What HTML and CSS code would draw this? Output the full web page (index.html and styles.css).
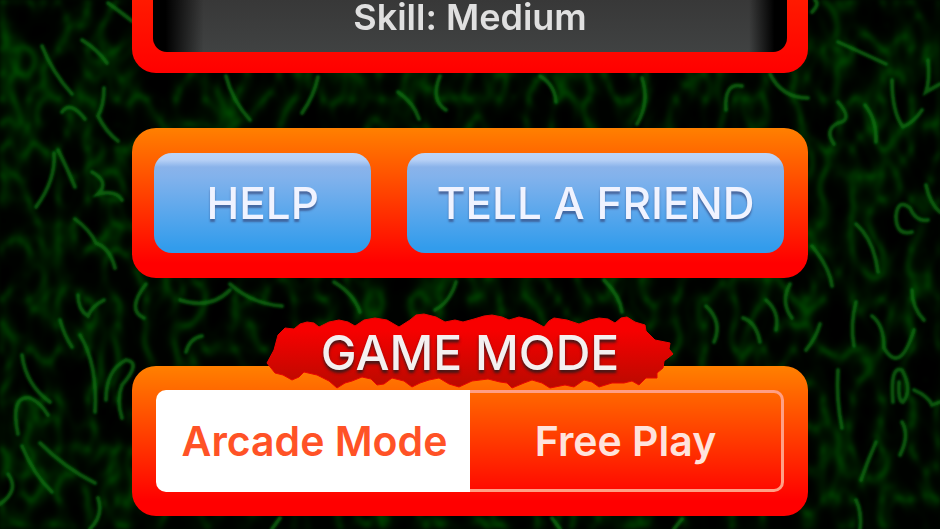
FILE: index.html
```html
<!DOCTYPE html>
<html lang="en">
<head>
  <meta charset="UTF-8">
  <meta name="viewport" content="width=device-width, initial-scale=1.0">
  <title>Game Mode</title>
  <link rel="stylesheet" href="styles.css">
</head>
<body>
  <svg class="grass" viewBox="0 0 940 529" preserveAspectRatio="xMidYMid slice" aria-hidden="true">
    <filter id="wisps" x="0" y="0" width="100%" height="100%" color-interpolation-filters="sRGB">
      <feTurbulence type="turbulence" baseFrequency="0.034 0.02" numOctaves="2" seed="8"/>
      <feColorMatrix values="0 0 0 0 0  1 0 0 0 0  0 0 0 0 0  0 0 0 0 1"/>
      <feComponentTransfer>
        <feFuncG type="table" tableValues="0.3 0.15 0.08 0.04 0.02 0.01 0.01 0 0 0 0 0 0"/>
      </feComponentTransfer>
      <feGaussianBlur stdDeviation="2"/>
    </filter>
    <filter id="soft">
      <feGaussianBlur stdDeviation="1"/>
    </filter>
    <rect width="940" height="529" filter="url(#wisps)"/>
    <g filter="url(#soft)">
      <g id="blades" class="blades">
        <path d="M108 3Q118 10 132 21"/>
        <path d="M42 46Q52 72 72 94"/>
        <path d="M82 40Q98 50 107 63"/>
        <path d="M104 88Q104 105 98 116Q106 132 118 141"/>
        <path d="M62 112Q70 100 85 119"/>
        <path d="M54 153Q56 180 36 207"/>
        <path d="M58 150Q68 170 75 187"/>
        <path d="M75 219Q90 230 96 243Q110 248 115 268"/>
        <path d="M92 172Q110 182 98 194Q116 190 122 200"/>
        <path d="M78 295Q78 310 88 316Q92 306 104 300"/>
        <path d="M60 320Q64 335 72 347"/>
        <path d="M80 335Q98 365 95 412"/>
        <path d="M106 400Q106 370 126 360Q142 362 122 385Q116 400 122 418"/>
        <path d="M22 355Q26 385 50 402"/>
        <path d="M18 434Q10 395 30 398Q40 402 48 415"/>
        <path d="M40 443Q65 468 95 483"/>
        <path d="M22 446Q34 475 52 492"/>
        <path d="M0 504Q20 490 8 474"/>
        <path d="M90 529Q104 515 98 498"/>
        <path d="M812 12Q820 4 815 0"/>
        <path d="M838 42Q856 50 886 64"/>
        <path d="M892 80Q892 112 903 127Q914 122 922 110"/>
        <path d="M928 60Q930 80 926 92L940 84"/>
        <path d="M838 102Q854 120 838 123Q824 130 834 144"/>
        <path d="M865 105Q877 120 876 142"/>
        <path d="M912 232Q896 236 896 216Q898 198 910 208Q916 222 928 220"/>
        <path d="M926 185Q930 204 940 212"/>
        <path d="M856 224Q874 240 878 272"/>
        <path d="M812 246Q830 268 832 286"/>
        <path d="M912 290Q912 308 924 320"/>
        <path d="M856 302Q850 325 854 346"/>
        <path d="M806 350Q816 338 820 324"/>
        <path d="M872 316Q884 325 884 348Q900 375 914 330"/>
        <path d="M893 402Q890 365 902 370Q913 390 903 402Q898 402 899 382"/>
        <path d="M914 390Q928 396 932 405L940 402"/>
        <path d="M876 442Q868 460 861 480"/>
        <path d="M902 422Q910 435 900 455"/>
        <path d="M856 500Q862 512 860 529"/>
        <path d="M838 370Q836 400 842 428"/>
        <path d="M226 76Q232 100 250 120"/>
        <path d="M318 77Q314 96 302 113"/>
        <path d="M398 92Q414 103 419 119"/>
        <path d="M440 76Q430 100 446 110"/>
        <path d="M540 76Q555 85 556 102"/>
        <path d="M642 78Q650 102 637 124"/>
        <path d="M726 110Q724 82 742 86"/>
        <path d="M770 74Q782 98 808 98"/>
        <path d="M146 284Q126 310 144 318"/>
        <path d="M180 300Q210 310 230 290"/>
        <path d="M186 352Q190 338 202 336"/>
        <path d="M230 284Q252 304 282 306"/>
        <path d="M334 282Q354 294 360 312"/>
        <path d="M456 282Q450 302 435 310"/>
        <path d="M604 280Q620 296 622 312"/>
        <path d="M706 306Q723 322 714 342"/>
        <path d="M743 318Q756 322 760 342"/>
        <path d="M766 300Q780 312 776 330"/>
        <path d="M790 284Q780 302 792 318"/>
        <path d="M280 518L272 529M552 518L560 529M682 519L674 529"/>
      </g>
    </g>
  </svg>

  <main>
    <section class="panel skill-panel">
      <div class="skill">Skill: Medium</div>
    </section>

    <section class="panel buttons">
      <button type="button" class="help">HELP</button>
      <button type="button" class="tell">TELL A FRIEND</button>
    </section>

    <section class="panel mode-panel">
      <div class="title">
        <svg viewBox="264 313 408 76" aria-hidden="true">
          <defs>
            <linearGradient id="red" x1="0" y1="0" x2="0" y2="1">
              <stop offset="0.2" stop-color="#f80000"/>
              <stop offset="1" stop-color="#b90a00"/>
            </linearGradient>
          </defs>
          <path fill="url(#red)" stroke="#e80500" stroke-linejoin="round" d="M265 363L272 350L276 335L283 328L292 329L298 324L305 322L312 323L317 327L327 322L337 320L346 322L353 326L362 320L373 318L385 320L397 327L408 320L414 315L422 314L434 317L443 322L453 320L461 322L472 319L482 316L490 315L500 317L507 320L517 317L529 320L542 327L547 321L552 318L565 320L577 324L588 320L597 318L606 319L613 323L619 318L625 317L633 322L643 325L644 331L648 335L653 340L668 343L667 349L671 354L662 361L661 368L655 373L655 378L644 378L637 385L630 381L622 383L610 383L597 387L590 382L582 380L572 387L563 385L548 388L540 383L530 380L522 383L510 388L505 383L498 382L486 379L470 381L457 387L447 384L437 378L427 380L418 383L410 387L402 381L390 378L382 384L375 385L369 379L360 377L350 381L343 383L335 388L327 381L315 375L302 372L297 377L290 380L281 375L273 373Z"/>
        </svg>
        <h2>GAME MODE</h2>
      </div>
      <div class="segments">
        <input type="radio" name="mode" id="arcade" checked>
        <label for="arcade">Arcade Mode</label>
        <input type="radio" name="mode" id="free">
        <label for="free">Free Play</label>
      </div>
    </section>
  </main>
</body>
</html>
```
FILE: styles.css
```css
* {
  box-sizing: border-box;
}
body {
  margin: 0;
  background: #000500;
  font-family: Inter, "Liberation Sans", sans-serif;
}
.grass {
  position: fixed;
  top: 0;
  left: 0;
  width: 100%;
  height: 100%;
  z-index: -1;
}
.blades {
  fill: none;
  stroke: #0b7a10;
  stroke-width: 4;
  stroke-linecap: round;
  opacity: 0.7;
}
main {
  padding: 0 132px;
}
.panel {
  position: relative;
  border-radius: 24px;
  background: linear-gradient(#ff8000, #ff0000 90%);
}
.skill-panel {
  padding: 0 21px 21px;
  border-radius: 0 0 24px 24px;
  background: linear-gradient(#ff1a00, #ff0000);
}
.skill {
  height: 52px;
  border-radius: 0 0 14px 14px;
  background:
    linear-gradient(90deg, #000 2%, transparent 8%, transparent 94%, #000 98%),
    linear-gradient(#383838, #404242);
  color: #e0e0e0;
  font-size: 36px;
  font-weight: 600;
  line-height: 34px;
  text-align: center;
}
.buttons {
  display: flex;
  gap: 36px;
  margin-top: 55px;
  padding: 25px 24px 25px 22px;
}
button {
  height: 100px;
  padding: 0;
  border: none;
  border-radius: 18px;
  background: linear-gradient(#bdd5f8, #b6d0f6 7%, #8ab3ea 14%, #82b2ec 24%, #329cec 95%);
  color: #f0f3ff;
  font-family: inherit;
  font-size: 44px;
  font-weight: 500;
  text-shadow: 0 3px 2px rgba(50, 60, 110, 0.6);
  cursor: pointer;
}
.help {
  flex: 217;
}
.tell {
  flex: 376;
}
.mode-panel {
  margin: 88px 0 13px;
  padding: 24px;
}
.title {
  position: absolute;
  top: -53px;
  left: 50%;
  width: 408px;
  height: 76px;
  transform: translateX(-50%);
}
.title svg {
  display: block;
}
h2 {
  position: absolute;
  inset: 0;
  margin: 0;
  color: #f4f0f0;
  font-size: 48px;
  font-weight: 500;
  line-height: 80px;
  text-align: center;
  text-shadow: 0 3px 3px rgba(30, 30, 30, 0.8);
}
.segments {
  display: flex;
}
.segments input {
  position: absolute;
  opacity: 0;
}
.segments label {
  flex: 1;
  border: 3px solid #ff9f85;
  color: #ffe3dc;
  font-size: 41px;
  font-weight: 600;
  line-height: 96px;
  text-align: center;
  white-space: nowrap;
  cursor: pointer;
}
.segments label:first-of-type {
  border-right: none;
  border-radius: 10px 0 0 10px;
}
.segments label:last-of-type {
  border-left: none;
  border-radius: 0 10px 10px 0;
}
.segments input:checked + label {
  border-color: #fff;
  background: #fff;
  color: #ff5226;
}
```
